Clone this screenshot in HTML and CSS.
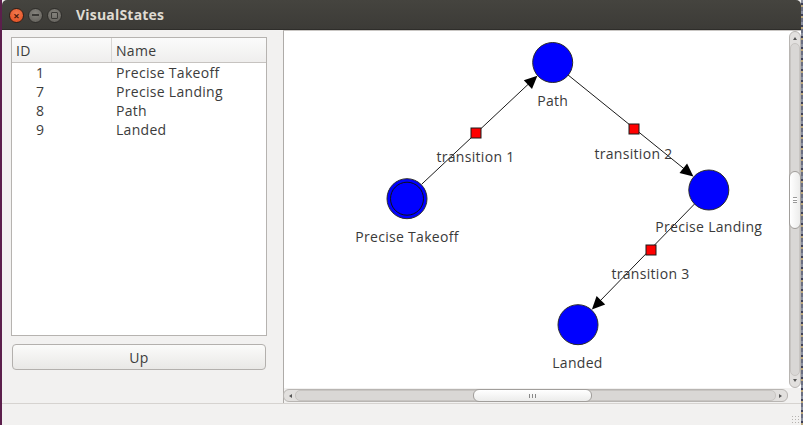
FILE: index.html
```html
<!DOCTYPE html>
<html>
<head>
<meta charset="utf-8">
<link rel="stylesheet" href="styles.css">
</head>
<body>
<div class="desk-left"></div>
<div class="window">
  <div class="titlebar">
    <div class="tb-buttons">
      <span class="tb-btn close">×</span>
      <span class="tb-btn minimize"><span class="min-bar"></span></span>
      <span class="tb-btn maximize"><span class="max-box"></span></span>
    </div>
    <div class="title">VisualStates</div>
  </div>
  <div class="content">
    <div class="left">
      <div class="table">
        <div class="thead">
          <div class="th th-id">ID</div>
          <div class="th th-name">Name</div>
        </div>
        <div class="row"><span class="c-id">1</span><span class="c-name">Precise Takeoff</span></div>
        <div class="row"><span class="c-id">7</span><span class="c-name">Precise Landing</span></div>
        <div class="row"><span class="c-id">8</span><span class="c-name">Path</span></div>
        <div class="row"><span class="c-id">9</span><span class="c-name">Landed</span></div>
      </div>
      <button class="btn-up">Up</button>
    </div>
    <div class="view">
      <div class="canvas">
        <svg width="504" height="357" viewBox="284 31 504 357" xmlns="http://www.w3.org/2000/svg">
          <g stroke="#1a1a1a" stroke-width="1" fill="none">
            <line x1="421.6" y1="184.3" x2="529" y2="83.5"/>
            <line x1="567.6" y1="74.6" x2="685" y2="169.5"/>
            <line x1="695.1" y1="203.4" x2="599.5" y2="301.5"/>
          </g>
          <g fill="#000">
            <polygon points="537.4,75.7 532,89 523.8,80.2"/>
            <polygon points="693.4,176.4 679.5,172.9 687.1,163.5"/>
            <polygon points="591.9,309.6 605.2,304.5 596.6,296.1"/>
          </g>
          <g fill="#0000ff" stroke="#2b2b2b" stroke-width="1">
            <circle cx="552.7" cy="62.5" r="20"/>
            <circle cx="407" cy="198.7" r="20"/>
            <circle cx="708.8" cy="190" r="20"/>
            <circle cx="578" cy="324.7" r="20"/>
          </g>
          <circle cx="407" cy="198.7" r="16.5" fill="none" stroke="#111" stroke-width="1"/>
          <g fill="#ff0000" stroke="#1a1a1a" stroke-width="1">
            <rect x="471" y="128" width="10" height="10"/>
            <rect x="629" y="124" width="10" height="10"/>
            <rect x="646" y="245" width="10" height="10"/>
          </g>
          <g class="lbl" text-anchor="middle">
            <text x="552.7" y="105.5">Path</text>
            <text x="407" y="241.5">Precise Takeoff</text>
            <text x="708.8" y="232">Precise Landing</text>
            <text x="577.5" y="367.5">Landed</text>
            <text x="475.5" y="161.5">transition 1</text>
            <text x="633.5" y="158.5">transition 2</text>
            <text x="650.5" y="279">transition 3</text>
          </g>
        </svg>
      </div>
      <div class="vscroll">
        <div class="v-outer">
          <span class="arr arr-up"></span>
          <div class="v-track"><div class="v-thumb"><span class="grip-v"></span></div></div>
          <span class="arr arr-down"></span>
        </div>
      </div>
      <div class="hscroll">
        <div class="h-outer">
          <span class="arr arr-left"></span>
          <div class="h-track"><div class="h-thumb"><span class="grip-h"></span></div></div>
          <span class="arr arr-right"></span>
        </div>
      </div>
      <div class="corner"></div>
    </div>
  </div>
  <div class="statusbar"><span class="sizegrip"></span></div>
</div>
<div class="desk-right"></div>
</body>
</html>
```
FILE: styles.css
```css
* { box-sizing: border-box; }
html, body { margin: 0; padding: 0; }
body {
  width: 803px;
  height: 425px;
  overflow: hidden;
  display: flex;
  background: #5a1e4a;
  font-family: "Open Sans", "DejaVu Sans", sans-serif;
  font-size: 14px;
  letter-spacing: 0.3px;
  color: #3c3c3c;
}
.desk-left { width: 2px; background: #5c1f4c; }
.desk-right {
  width: 2px;
  background: repeating-linear-gradient(180deg, #8a8f9e 0 3px, #3d3f58 3px 5px, #b9a57a 5px 7px, #6b6f82 7px 11px);
}
.window {
  width: 799px;
  height: 425px;
  display: flex;
  flex-direction: column;
  background: #f2f1f0;
}
.titlebar {
  height: 30px;
  background: linear-gradient(#45443f, #3c3b37);
  border-radius: 5px 5px 0 0;
  display: flex;
  align-items: center;
  border-bottom: 1px solid #2e2d2a;
}
.tb-buttons { display: flex; align-items: center; margin-left: 7px; gap: 4px; margin-top: 1px; }
.tb-btn {
  width: 15px; height: 15px; border-radius: 50%;
  display: flex; align-items: center; justify-content: center;
  font-size: 11px; line-height: 1; font-weight: bold; letter-spacing: 0;
}
.close {
  background: radial-gradient(circle at 50% 35%, #f37a4f, #df4a1d);
  color: #4a1a0a;
  border: 1px solid #2f1f18;
}
.minimize, .maximize {
  background: radial-gradient(circle at 50% 35%, #85837d, #5f5d58);
  border: 1px solid #2f2e2b;
}
.min-bar { width: 7px; height: 2px; background: #3a3936; }
.max-box { width: 7px; height: 7px; border: 1.5px solid #3a3936; border-radius: 1px; }
.title {
  margin-left: 14px;
  color: #dfdbd2;
  font-weight: bold;
  font-size: 14px;
  letter-spacing: 0.2px;
}
.content { flex: 1; display: flex; min-height: 0; }
.left {
  width: 281px;
  padding: 7px 0 0 9px;
  display: flex;
  flex-direction: column;
}
.table {
  width: 256px;
  height: 299px;
  background: #fff;
  border: 1px solid #b6b3b0;
}
.thead {
  height: 25px;
  display: flex;
  background: linear-gradient(#fbfbfb, #efeeed);
  border-bottom: 1px solid #c6c3c0;
}
.th { display: flex; align-items: center; padding-left: 4px; padding-top: 1px; }
.th-id { width: 100px; border-right: 1px solid #d8d6d4; }
.th-name { flex: 1; }
.row { height: 19px; display: flex; align-items: center; }
.c-id { width: 104px; padding-left: 24px; }
.c-name { flex: 1; }
.btn-up {
  margin: 8px 0 0 1px;
  width: 254px;
  height: 26px;
  border: 1px solid #b3b0ad;
  border-radius: 4px;
  background: linear-gradient(#fbfbfa, #e9e8e6);
  font-family: inherit;
  font-size: 14px;
  letter-spacing: 0.3px;
  color: #3c3c3c;
  padding: 0;
}
.view {
  flex: 1;
  display: grid;
  grid-template-columns: 504px 13px;
  grid-template-rows: 357px 15px;
  border-left: 1px solid #aeaba8;
  border-top: 1px solid #c9c6c3;
}
.canvas { background: #fff; overflow: hidden; }
.canvas svg { display: block; }
.lbl text { font-family: "Open Sans", "DejaVu Sans", sans-serif; font-size: 14px; letter-spacing: 0.3px; fill: #3a3a3a; }
.vscroll { background: #fff; padding: 0 0 0 1px; }
.v-outer {
  height: 357px;
  width: 12px;
  border: 1px solid #b8b5b2;
  border-radius: 6px;
  background: #e2e0de;
  display: flex;
  flex-direction: column;
  align-items: center;
}
.v-track {
  flex: 1;
  width: 10px;
  border: 1px solid #c7c4c1;
  border-radius: 5px;
  background: #d9d7d5;
  margin: 3px 0;
  display: flex;
  flex-direction: column;
  align-items: center;
}
.v-thumb {
  margin-top: 127px;
  width: 12px;
  height: 58px;
  border: 1px solid #a19e9b;
  border-radius: 6px;
  background: linear-gradient(90deg, #ffffff, #ececeb);
  display: flex;
  align-items: center;
  justify-content: center;
}
.grip-v { width: 4px; height: 6px; border-top: 1px solid #999; border-bottom: 1px solid #999; background: linear-gradient(#fff 0 2px, #999 2px 3px, #fff 3px); }
.hscroll { background: #f2f1f0; padding: 1px 0 1px 0; }
.h-outer {
  height: 13px;
  border: 1px solid #b8b5b2;
  border-radius: 6px;
  background: #e2e0de;
  display: flex;
  align-items: center;
  margin-left: -1px;
}
.h-track {
  flex: 1;
  height: 11px;
  border: 1px solid #c7c4c1;
  border-radius: 5px;
  background: #d9d7d5;
  margin: 0 3px;
  display: flex;
  align-items: center;
}
.h-thumb {
  margin-left: 177px;
  width: 119px;
  height: 13px;
  border: 1px solid #a19e9b;
  border-radius: 6px;
  background: linear-gradient(#ffffff, #ececeb);
  display: flex;
  align-items: center;
  justify-content: center;
}
.grip-h { width: 7px; height: 4px; border-left: 1px solid #888; border-right: 1px solid #888; background: linear-gradient(90deg, transparent 0 2px, #888 2px 3px, transparent 3px); }
.arr { width: 0; height: 0; flex: none; }
.arr-up { margin-top: 5px; border-left: 2.5px solid transparent; border-right: 2.5px solid transparent; border-bottom: 3px solid #555; }
.arr-down { margin-bottom: 5px; border-left: 2.5px solid transparent; border-right: 2.5px solid transparent; border-top: 3px solid #555; }
.arr-left { margin-left: 5px; border-top: 2.5px solid transparent; border-bottom: 2.5px solid transparent; border-right: 3px solid #555; }
.arr-right { margin-right: 5px; border-top: 2.5px solid transparent; border-bottom: 2.5px solid transparent; border-left: 3px solid #555; }
.corner { background: #f2f1f0; }
.statusbar {
  height: 22px;
  border-top: 1px solid #d6d3d0;
  display: flex;
  justify-content: flex-end;
  align-items: flex-end;
}
.sizegrip {
  width: 8px; height: 8px; margin: 0 2px 2px 0;
  background: radial-gradient(circle, #b5b2af 0.7px, transparent 1px) 0 0 / 3px 3px;
}
```
